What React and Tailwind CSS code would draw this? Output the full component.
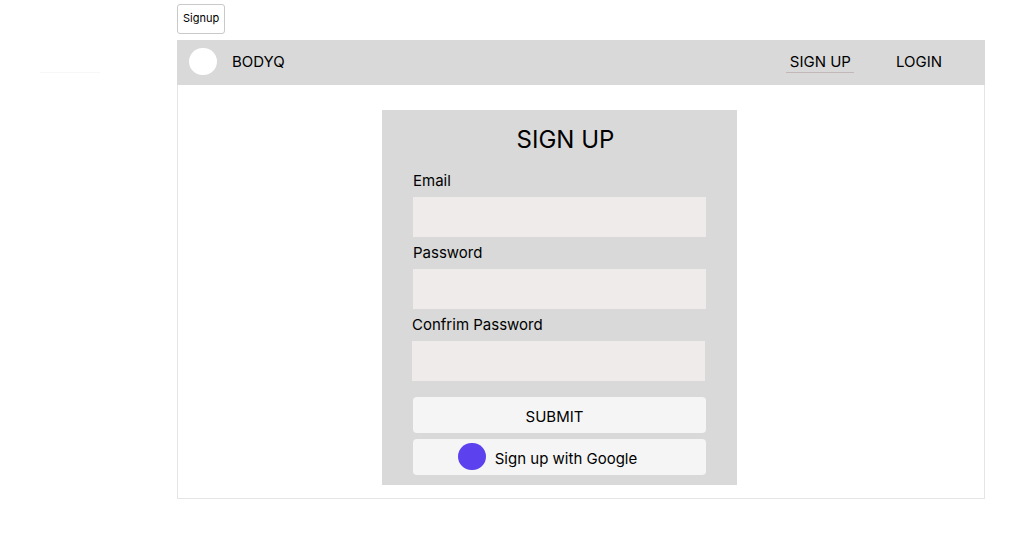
const fields = [
  { id: 'email', label: 'Email', type: 'email' },
  { id: 'password', label: 'Password', type: 'password' },
  { id: 'confirm', label: 'Confrim Password', type: 'password' },
];

function Header() {
  return (
    <header className="flex h-[45px] items-center bg-[#d9d9d9] pr-[43px] pl-3">
      <span className="mb-0.5 h-[27px] w-7 rounded-full bg-white" />
      <span className="ml-[15px] pb-0.5 leading-5">BODYQ</span>
      <nav className="ml-auto flex items-center gap-[42px] leading-5">
        <a href="#signup" className="border-b border-[#c2b8b8] pr-[3px] pl-1">
          SIGN UP
        </a>
        <a href="#login" className="border-b border-transparent">
          LOGIN
        </a>
      </nav>
    </header>
  );
}

function SignupForm() {
  return (
    <form className="w-[355px] bg-[#d9d9d9] px-[31px] pt-2.5 pb-2.5" onSubmit={(e) => e.preventDefault()}>
      <h1 className="mb-[5px] pl-3 text-center text-2xl leading-10">SIGN UP</h1>
      {fields.map((f) => (
        <div key={f.id} className={f.id === 'confirm' ? '-ml-px mr-px' : ''}>
          <label htmlFor={f.id} className="block leading-8">
            {f.label}
          </label>
          <input id={f.id} type={f.type} className="block h-10 w-full bg-[#efebea] px-3 outline-none" />
        </div>
      ))}
      <div className="mt-4 flex flex-col gap-1.5">
        <button type="submit" className="h-9 rounded bg-[#f5f5f5] pt-1 pr-2.5">
          SUBMIT
        </button>
        <button type="button" className="flex h-9 items-center justify-center gap-[9px] rounded bg-[#f5f5f5] pr-6">
          <span className="mb-0.5 h-[27px] w-7 rounded-full bg-[#5b42ee]" />
          <span className="pt-1">Sign up with Google</span>
        </button>
      </div>
    </form>
  );
}

export default function App() {
  return (
    <div className="flex min-h-screen bg-white pr-10 font-['Inter',sans-serif] text-[15px] text-black">
      <aside className="w-[177px] shrink-0 px-10 pt-[72px]">
        <hr className="w-[60px] border-[#f7f7f7]" />
      </aside>
      <main className="flex-1 pt-1">
        <div className="mb-1.5 flex">
          <button type="button" className="h-[30px] rounded-[3px] border border-[#c9c9c9] px-[5px] pb-0.5 text-[11px]">
            Signup
          </button>
        </div>
        <section>
          <Header />
          <div className="flex justify-center border border-t-0 border-[#e5e5e5] pt-[25px] pr-[43px] pb-[13px]">
            <SignupForm />
          </div>
        </section>
      </main>
    </div>
  );
}
